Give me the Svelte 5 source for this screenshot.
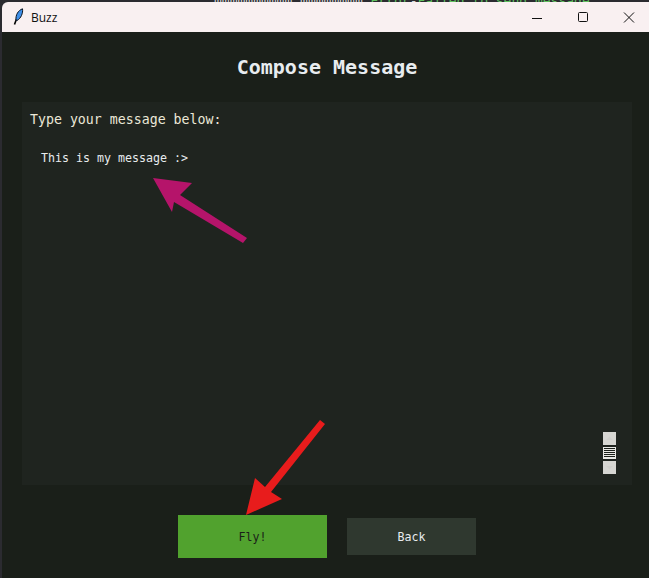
<script lang="ts">
const title = "Compose Message"
const prompt = "Type your message below:"
const message = "This is my message :>"
</script>

<div class="desktop">
    <div class="behind"><span>mmmmmmmmmm mmmmmmmm:  </span><span class="green">Error</span><span>   - </span><span class="green">Failed to send message</span></div>
    <div class="window">
        <header class="titlebar">
            <svg class="feather" width="12" height="18" viewBox="0 0 12 18" aria-hidden="true">
                <path d="M1.5 16.5 L3.5 11" stroke="#000" stroke-width="1.6" fill="none"/>
                <path d="M3 12 C2.5 7 5 2.5 9.5 0.8 C10.2 5 8 10.5 4 12.5 Z" fill="#3f8fe8" stroke="#08121f" stroke-width="1"/>
            </svg>
            <span class="app-name">Buzz</span>
            <div class="controls">
                <svg width="46" height="30" viewBox="0 0 46 30" aria-hidden="true"><path d="M18 16.5 H28" stroke="#111" stroke-width="1"/></svg>
                <svg width="46" height="30" viewBox="0 0 46 30" aria-hidden="true"><rect x="18.5" y="10.5" width="9" height="9" rx="1" fill="none" stroke="#111" stroke-width="1"/></svg>
                <svg width="46" height="30" viewBox="0 0 46 30" aria-hidden="true"><path d="M18 10.5 L28 20.5 M28 10.5 L18 20.5" stroke="#111" stroke-width="1"/></svg>
            </div>
        </header>

        <main class="content">
            <h1 class="heading">{title}</h1>
            <section class="panel">
                <p class="prompt">{prompt}</p>
                <p class="message">{message}</p>
                <div class="scroller">
                    <span class="step"><svg width="13" height="13" viewBox="0 0 13 13" aria-hidden="true"><path d="M3 8 L6.5 4.5 L10 8 Z" fill="#cfcfcb"/></svg></span>
                    <span class="thumb"></span>
                    <span class="step"><svg width="13" height="13" viewBox="0 0 13 13" aria-hidden="true"><path d="M3 5 L6.5 8.5 L10 5 Z" fill="#cfcfcb"/></svg></span>
                </div>
            </section>
            <div class="actions">
                <button class="fly">Fly!</button>
                <button class="back">Back</button>
            </div>
        </main>
    </div>

    <svg class="arrows" width="649" height="578" viewBox="0 0 649 578" aria-hidden="true">
        <polygon points="153,178 192,183 180,195 247,238 243,243 174,202 172,212" fill="#b5146a"/>
        <polygon points="246,515 255,478 265,487 320,420 325,424 271,492 282,499" fill="#e81c1c"/>
    </svg>
</div>

<style>
    :global(body) {
        margin: 0;
        background: #1a1f19;
    }

    .desktop {
        position: relative;
        width: 649px;
        height: 578px;
        overflow: hidden;
        background: #2b2b30;
    }

    .behind {
        height: 2px;
        overflow: hidden;
        padding-left: 214px;
        font: 13px/1px "DejaVu Sans Mono", monospace;
        white-space: pre;
        color: #d8d8d8;
    }

    .green {
        color: #5fbf5f;
    }

    .window {
        margin-left: 2px;
        height: 576px;
        display: flex;
        flex-direction: column;
        border-radius: 6px 0 0 0;
        overflow: hidden;
    }

    .titlebar {
        height: 30px;
        flex: none;
        display: flex;
        align-items: center;
        background: #f9f0f1;
    }

    .feather {
        margin-left: 11px;
    }

    .app-name {
        margin-left: 6px;
        font: 12px "Open Sans", "Liberation Sans", sans-serif;
        color: #111;
    }

    .controls {
        margin-left: auto;
        margin-right: -3px;
        display: flex;
    }

    .controls svg {
        display: block;
    }

    .content {
        flex: 1;
        display: flex;
        flex-direction: column;
        background: #1a1f19;
        padding: 0 17px 0 20px;
    }

    .heading {
        margin: 23px 0 0;
        height: 47px;
        text-align: center;
        font: 700 20px/24px "DejaVu Sans Mono", monospace;
        color: #e8ecef;
    }

    .panel {
        position: relative;
        height: 383px;
        background: #1f241f;
    }

    .prompt {
        margin: 9px 0 0 8px;
        font: 13.25px/17px "DejaVu Sans Mono", monospace;
        color: #ece8d8;
    }

    .message {
        margin: 23px 0 0 19px;
        font: 11.63px/15px "DejaVu Sans Mono", monospace;
        color: #e8ecef;
    }

    .scroller {
        position: absolute;
        left: 581px;
        top: 330px;
        display: flex;
        flex-direction: column;
    }

    .step {
        width: 13px;
        height: 13px;
        background: #d6d6d2;
    }

    .step svg {
        display: block;
    }

    .thumb {
        width: 13px;
        height: 12px;
        margin: 2px 0;
        box-sizing: border-box;
        border: 1px solid #e8e8e4;
        background: repeating-linear-gradient(#1a1f19 0 1px, #e8e8e4 1px 2px);
    }

    .actions {
        display: flex;
        align-items: center;
        margin: 30px 0 0 156px;
        gap: 20px;
    }

    button {
        border: 0;
        padding: 1px 0 0;
        font: 11.63px "DejaVu Sans Mono", monospace;
    }

    .fly {
        width: 149px;
        height: 43px;
        background: #51a22e;
        color: #1a1f19;
    }

    .back {
        width: 129px;
        height: 37px;
        background: #2f382f;
        color: #e8ecef;
    }

    .arrows {
        position: absolute;
        left: 0;
        top: 0;
        pointer-events: none;
    }
</style>
